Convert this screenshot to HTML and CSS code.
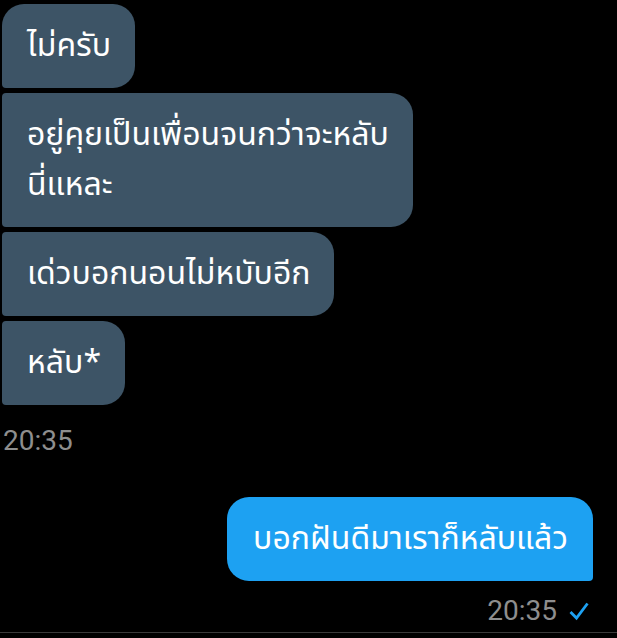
FILE: index.html
```html
<!DOCTYPE html>
<html lang="th">
<head>
    <meta charset="UTF-8">
    <meta name="viewport" content="width=device-width, initial-scale=1.0">
    <title>ข้อความ</title>
    <link rel="stylesheet" href="styles.css">
</head>
<body>
    <div class="chat">
        <div class="group received">
            <div class="bubble">ไม่ครับ</div>
            <div class="bubble">อยู่คุยเป็นเพื่อนจนกว่าจะหลับ<br>นี่แหละ</div>
            <div class="bubble">เด่วบอกนอนไม่หบับอีก</div>
            <div class="bubble">หลับ*</div>
            <div class="time">20:35</div>
        </div>

        <div class="group sent">
            <div class="bubble">บอกฝันดีมาเราก็หลับแล้ว</div>
            <div class="time">20:35
                <svg class="check" width="20" height="20" viewBox="0 0 20 20">
                    <path d="M1.5 11 L7.5 17 L18.5 2.5" fill="none" stroke="#1da1f2" stroke-width="2.8"/>
                </svg>
            </div>
        </div>
    </div>
    <div class="divider"></div>
</body>
</html>
```

FILE: styles.css
```css
body {
    margin: 0;
    background-color: #000;
    font-family: "Noto Sans Thai", "Noto Sans", Roboto, sans-serif;
    color: #fff;
}
.chat {
    display: flex;
    flex-direction: column;
    padding-top: 4px;
    height: 628px;
}
.group {
    display: flex;
    flex-direction: column;
    gap: 5px;
}
.received {
    align-items: flex-start;
    padding-left: 2px;
}
.sent {
    align-items: flex-end;
    padding-right: 24px;
    margin-top: 40px;
}
.bubble {
    font-size: 32px;
    line-height: 50px;
    padding: 17px 24px 17px 25px;
}
.received .bubble {
    background-color: #3d5466;
    border-radius: 4px 22px 22px 4px;
}
.received .bubble:first-child {
    border-top-left-radius: 22px;
}
.sent .bubble {
    background-color: #1da1f2;
    border-radius: 22px 22px 4px 22px;
    padding: 17px 25px 17px 26px;
}
.time {
    font-family: Roboto, sans-serif;
    font-size: 28px;
    color: #8e8e8e;
    margin-top: 14px;
    display: flex;
    align-items: center;
    gap: 12px;
}
.received .time {
    padding-left: 1px;
}
.sent .time {
    margin-top: 8px;
    margin-right: 4px;
}
.divider {
    height: 1px;
    background-color: #3a3a3a;
}
```
